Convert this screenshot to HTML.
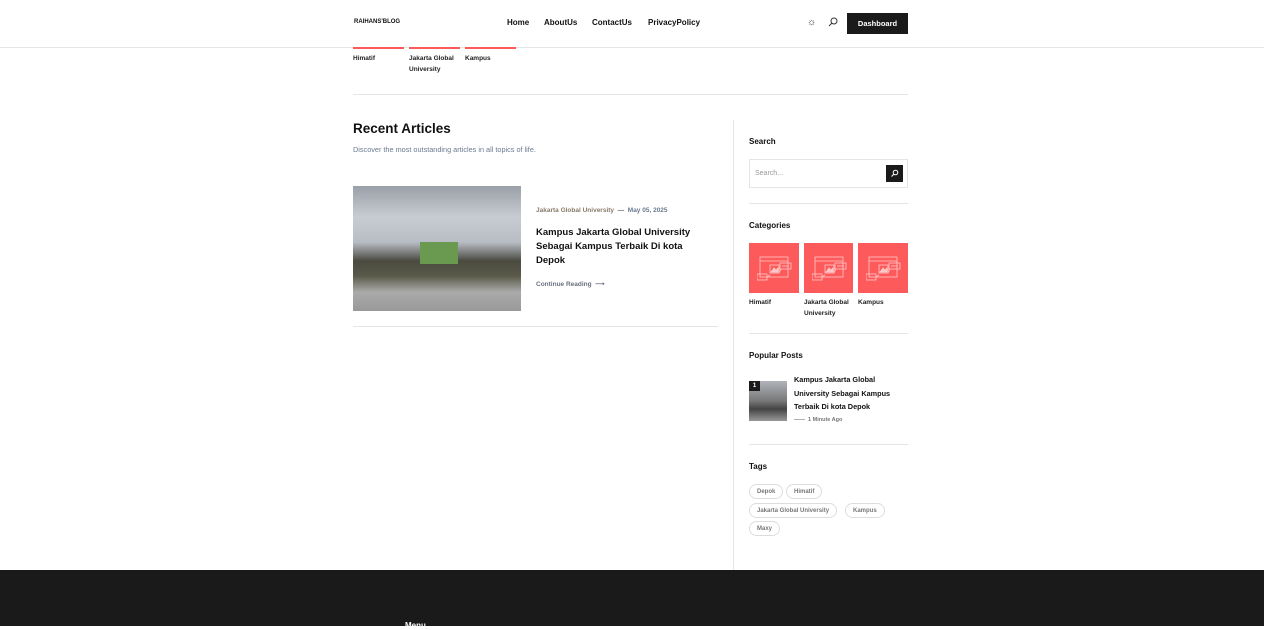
<!DOCTYPE html>
<html><head><meta charset="utf-8"><style>
*{margin:0;padding:0;box-sizing:border-box}
body{width:1264px;height:626px;overflow:hidden;background:#fff;font-family:"Liberation Sans",sans-serif;color:#111;position:relative}
.a{position:absolute}
.b{font-weight:bold}
.hdr{left:0;top:0;width:1264px;height:48px;border-bottom:1px solid #e5e5e5}
.nav{font-size:8px;font-weight:bold;top:18px}
.cat{font-size:6.5px;font-weight:bold;line-height:11px;color:#222}
.sep{height:1px;background:#e5e5e5}
.cb{width:50px;height:50px;background:#fd5b5b}
.cb svg{position:absolute;left:8px;top:12px}
.tag{height:15px;border:1px solid #ddd;border-radius:8px;font-size:6px;color:#777;padding:0 7px;line-height:14px;font-weight:bold}
</style></head><body>
<div class="a hdr"></div>
<div class="a b" style="left:354px;top:19px;font-size:6px">RAIHANS'BLOG</div>
<div class="a nav" style="left:507px">Home</div>
<div class="a nav" style="left:544px">AboutUs</div>
<div class="a nav" style="left:592px">ContactUs</div>
<div class="a nav" style="left:648px">PrivacyPolicy</div>
<div class="a" style="left:807px;top:17px;font-size:10px;color:#333">☼</div>
<svg class="a" style="left:828px;top:17px" width="10" height="10"><circle cx="6" cy="4" r="3" fill="none" stroke="#333" stroke-width="1"/><line x1="4" y1="6" x2="1" y2="9" stroke="#333"/></svg>
<div class="a b" style="left:847px;top:13px;width:61px;height:21px;background:#1a1a1a;color:#fff;font-size:7.5px;text-align:center;line-height:21px">Dashboard</div>

<div class="a" style="left:353px;top:47px;width:51px;height:2px;background:#fd5b5b"></div>
<div class="a" style="left:409px;top:47px;width:51px;height:2px;background:#fd5b5b"></div>
<div class="a" style="left:465px;top:47px;width:51px;height:2px;background:#fd5b5b"></div>
<div class="a cat" style="left:353px;top:53px">Himatif</div>
<div class="a cat" style="left:409px;top:53px">Jakarta Global<br>University</div>
<div class="a cat" style="left:465px;top:53px">Kampus</div>
<div class="a sep" style="left:353px;top:94px;width:555px"></div>

<div class="a b" style="left:353px;top:121px;font-size:13.5px">Recent Articles</div>
<div class="a" style="left:353px;top:145px;font-size:7.3px;color:#6a7a90">Discover the most outstanding articles in all topics of life.</div>
<div class="a" style="left:353px;top:186px;width:168px;height:125px;background:linear-gradient(#9aa0a8 0%,#c8ccd2 25%,#b8bcc4 45%,#4a4a40 60%,#5a5a4a 72%,#aaa 85%,#999 100%)"></div>
<div class="a" style="left:420px;top:242px;width:38px;height:22px;background:#6a9a50"></div>
<div class="a" style="left:536px;top:207px;font-size:6.5px;color:#8a7a68;font-weight:bold">Jakarta Global University &nbsp;<span style="color:#555">—</span>&nbsp; <span style="color:#6a7a90">May 05, 2025</span></div>
<div class="a b" style="left:536px;top:226px;width:160px;font-size:9.5px;line-height:14px">Kampus Jakarta Global University Sebagai Kampus Terbaik Di kota Depok</div>
<div class="a b" style="left:536px;top:280px;font-size:6.5px;color:#6a7080">Continue Reading &nbsp;⟶</div>
<div class="a sep" style="left:353px;top:326px;width:365px"></div>
<div class="a" style="left:733px;top:120px;width:1px;height:450px;background:#e5e5e5"></div>

<div class="a b" style="left:749px;top:137px;font-size:8px">Search</div>
<div class="a" style="left:749px;top:159px;width:159px;height:29px;border:1px solid #e5e5e5"></div>
<div class="a" style="left:755px;top:170px;font-size:7px;color:#999">Search...</div>
<div class="a" style="left:886px;top:165px;width:17px;height:17px;background:#1a1a1a"></div>
<svg class="a" style="left:890px;top:169px" width="9" height="9"><circle cx="5.5" cy="3.5" r="2.3" fill="none" stroke="#fff"/><line x1="4" y1="5" x2="1.5" y2="7.5" stroke="#fff"/></svg>
<div class="a sep" style="left:749px;top:203px;width:159px"></div>
<div class="a b" style="left:749px;top:221px;font-size:8px">Categories</div>
<svg width="0" height="0" style="position:absolute"><defs><g id="ic" fill="none" stroke="#ffc8c8" stroke-width="0.8"><rect x="3" y="2" width="28" height="20"/><line x1="3" y1="6" x2="31" y2="6"/><rect x="13" y="10" width="9" height="8"/><path d="M14 17l3-4 2 2 2-2v4z" fill="#ffc8c8"/><rect x="23" y="8" width="11" height="6"/><line x1="25" y1="11" x2="32" y2="11"/><rect x="0" y="19" width="10" height="6"/><line x1="3" y1="22" x2="4" y2="22"/><line x1="10" y1="22" x2="13" y2="20"/><line x1="22" y1="18" x2="24" y2="14"/></g></defs></svg>
<div class="a cb" style="left:749px;top:243px"><svg width="36" height="28"><use href="#ic"/></svg></div>
<div class="a cb" style="left:804px;top:243px;width:49px"><svg width="36" height="28"><use href="#ic"/></svg></div>
<div class="a cb" style="left:858px;top:243px"><svg width="36" height="28"><use href="#ic"/></svg></div>
<div class="a cat" style="left:749px;top:297px;font-size:6.5px">Himatif</div>
<div class="a cat" style="left:804px;top:297px;font-size:6.5px">Jakarta Global<br>University</div>
<div class="a cat" style="left:858px;top:297px;font-size:6.5px">Kampus</div>
<div class="a sep" style="left:749px;top:333px;width:159px"></div>

<div class="a b" style="left:749px;top:351px;font-size:8px">Popular Posts</div>
<div class="a" style="left:749px;top:381px;width:38px;height:40px;background:linear-gradient(#b0b4ba,#777 50%,#444 70%,#999)"></div>
<div class="a b" style="left:749px;top:381px;width:11px;height:10px;background:#1a1a1a;color:#fff;font-size:6px;text-align:center;line-height:10px">1</div>
<div class="a b" style="left:794px;top:373px;width:110px;font-size:7.3px;line-height:13.5px">Kampus Jakarta Global University Sebagai Kampus Terbaik Di kota Depok</div>
<div class="a b" style="left:794px;top:417px;font-size:5.5px;color:#777">—— &nbsp;1 Minute Ago</div>
<div class="a sep" style="left:749px;top:444px;width:159px"></div>

<div class="a b" style="left:749px;top:462px;font-size:8px">Tags</div>
<div class="a tag" style="left:749px;top:484px">Depok</div>
<div class="a tag" style="left:786px;top:484px">Himatif</div>
<div class="a tag" style="left:749px;top:503px">Jakarta Global University</div>
<div class="a tag" style="left:845px;top:503px">Kampus</div>
<div class="a tag" style="left:749px;top:521px">Maxy</div>

<div class="a" style="left:0;top:570px;width:1264px;height:56px;background:#1a1a1a"></div>
<div class="a b" style="left:405px;top:621px;font-size:8px;color:#fff">Menu</div>
</body></html>
